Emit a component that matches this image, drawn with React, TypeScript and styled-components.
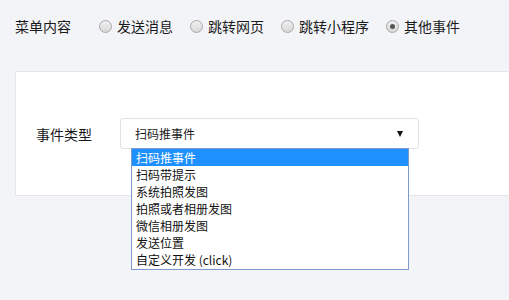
import React from 'react';
import styled, { createGlobalStyle } from 'styled-components';

const GlobalStyle = createGlobalStyle`
  html, body {
    margin: 0;
    padding: 0;
    background: #f3f4f8;
    overflow: hidden;
  }
  body {
    font-family: "Noto Sans CJK SC", "Noto Sans", sans-serif;
    color: #1a1a1a;
  }
`;

const menuTypes = ['发送消息', '跳转网页', '跳转小程序', '其他事件'];
const eventTypes = [
  '扫码推事件',
  '扫码带提示',
  '系统拍照发图',
  '拍照或者相册发图',
  '微信相册发图',
  '发送位置',
  '自定义开发 (click)',
];

export default function App() {
  return (
    <Page>
      <GlobalStyle />
      <TopRow>
        <RowLabel>菜单内容</RowLabel>
        <RadioGroup>
          {menuTypes.map((t, i) => (
            <Option key={t}>
              <Radio checked={i === 3} />
              <span>{t}</span>
            </Option>
          ))}
        </RadioGroup>
      </TopRow>
      <Card>
        <FormRow>
          <FieldLabel>事件类型</FieldLabel>
          <SelectWrap>
            <Select>
              <span>扫码推事件</span>
              <Arrow />
            </Select>
            <DropList>
              {eventTypes.map((t, i) => (
                <DropItem key={t} active={i === 0}>
                  {t}
                </DropItem>
              ))}
            </DropList>
          </SelectWrap>
        </FormRow>
      </Card>
    </Page>
  );
}

const Page = styled.div`
  width: 509px;
  height: 300px;
  overflow: hidden;
`;

const TopRow = styled.div`
  display: flex;
  align-items: center;
  height: 20px;
  padding: 16px 0 0 15px;
  font-size: 14px;
  line-height: 20px;
`;

const RowLabel = styled.div`
  width: 84px;
`;

const RadioGroup = styled.div`
  display: flex;
  align-items: center;
  gap: 17px;
`;

const Option = styled.label`
  display: flex;
  align-items: center;
  gap: 5px;
`;

const Radio = styled.span<{ checked?: boolean }>`
  width: 11px;
  height: 11px;
  border-radius: 50%;
  border: 1px solid #a9a9a9;
  background: linear-gradient(#f0f0f0, #d8d8d8);
  position: relative;
  box-sizing: content-box;

  &::after {
    content: '';
    display: ${({ checked }) => (checked ? 'block' : 'none')};
    position: absolute;
    left: 3px;
    top: 3px;
    width: 5px;
    height: 5px;
    border-radius: 50%;
    background: #555;
  }
`;

const Card = styled.div`
  margin: 35px 0 0 15px;
  height: 123px;
  background: #fff;
  border: 1px solid #e4e6eb;
  border-right: none;
`;

const FormRow = styled.div`
  display: flex;
  align-items: center;
  padding: 46px 0 0 20px;
`;

const FieldLabel = styled.div`
  width: 84px;
  font-size: 14px;
  line-height: 20px;
`;

const SelectWrap = styled.div`
  position: relative;
`;

const Select = styled.div`
  box-sizing: border-box;
  width: 299px;
  height: 31px;
  border: 1px solid #e2e3e8;
  border-radius: 3px;
  display: flex;
  align-items: center;
  justify-content: space-between;
  padding: 0 15px 0 14px;
  font-size: 12px;
  background: #fff;
`;

const Arrow = styled.span`
  width: 0;
  height: 0;
  border-left: 3.5px solid transparent;
  border-right: 3.5px solid transparent;
  border-top: 6px solid #111;
`;

const DropList = styled.div`
  position: absolute;
  left: 11px;
  top: 30px;
  width: 278px;
  box-sizing: border-box;
  border: 1px solid #7d9bd0;
  background: #fff;
  padding-bottom: 1px;
`;

const DropItem = styled.div<{ active?: boolean }>`
  height: 17px;
  line-height: 17px;
  padding-left: 4px;
  font-size: 12px;
  white-space: nowrap;
  color: ${({ active }) => (active ? '#fff' : '#111')};
  background: ${({ active }) => (active ? '#1e90ff' : 'transparent')};
`;
